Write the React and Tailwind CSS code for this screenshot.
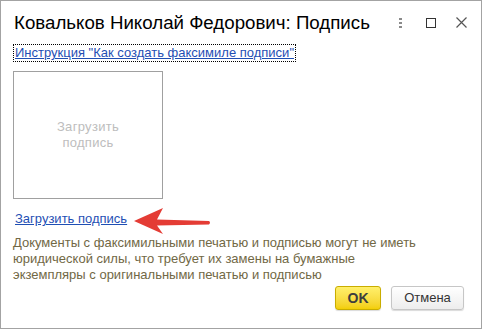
import React from 'react'

function App() {
  return (
    <div className="w-[483px] h-[330px] bg-white font-['Liberation_Sans',Arial,sans-serif]">
      <div className="relative w-[482px] h-[329px] border border-[#a3a3a3] bg-white">
        {/* Header */}
        <div className="flex items-center h-[43px] pl-[13px] pr-[14px]">
          <h1 className="text-[18.7px] leading-[22px] text-black mt-[1px]">Ковальков Николай Федорович: Подпись</h1>
          <div className="ml-auto flex items-center">
            <div className="flex flex-col gap-[2px] w-[2px] mr-[25px]">
              <span className="block w-[3px] h-[2px] bg-[#8a8a8a]"></span>
              <span className="block w-[3px] h-[2px] bg-[#8a8a8a]"></span>
              <span className="block w-[3px] h-[2px] bg-[#8a8a8a]"></span>
            </div>
            <div className="w-[10px] h-[10px] border-[1.5px] border-[#333] mr-[20px]"></div>
            <svg width="11" height="11" viewBox="0 0 11 11">
              <path d="M0.5 0.5 L10.5 10.5 M10.5 0.5 L0.5 10.5" stroke="#555" strokeWidth="1.2" />
            </svg>
          </div>
        </div>

        {/* Body */}
        <div className="pl-[12px] pr-[14px]">
          <a href="#" className="block w-fit border border-dotted border-black px-[1px] text-[13px] leading-[16px] text-[#1f4fb4] underline">
            Инструкция "Как создать факсимиле подписи"
          </a>

          <div className="mt-[9px] w-[150px] h-[128px] border border-[#a0a0a0] flex items-center justify-center">
            <div className="text-center text-[13px] leading-[16px] text-[#bdbdbd] tracking-[0.3px]">
              Загрузить<br />подпись
            </div>
          </div>

          <a href="#" className="block w-fit mt-[12px] ml-[2px] text-[13px] leading-[16px] text-[#1f4fb4] underline">
            Загрузить подпись
          </a>

          <p className="mt-[8px] text-[13px] leading-[16px] text-[#716845]">
            Документы с факсимильными печатью и подписью могут не иметь<br />
            юридической силы, что требует их замены на бумажные<br />
            экземпляры с оригинальными печатью и подписью
          </p>

          <div className="flex justify-end gap-[10px] mt-[3px] pr-[3px]">
            <button className="w-[46px] h-[24px] rounded-[3px] border border-[#c9ad00] bg-gradient-to-b from-[#fff06a] to-[#f3cf00] text-[14px] font-bold text-[#3d3d3d] shadow-[0_1px_1px_rgba(0,0,0,0.15)]">
              OK
            </button>
            <button className="w-[73px] h-[24px] rounded-[3px] border border-[#c6c6c6] bg-gradient-to-b from-white to-[#ededed] text-[13px] text-[#333] shadow-[0_1px_1px_rgba(0,0,0,0.15)]">
              Отмена
            </button>
          </div>
        </div>

        {/* Red annotation arrow */}
        <svg className="absolute left-[130px] top-[204px]" width="82" height="32" viewBox="0 0 82 32">
          <path d="M3 16 L32 3 L26 14.5 L78 16 Q80 17.5 78 19.5 L26 20.5 L32 29 Z" fill="#e43c35" />
        </svg>
      </div>
    </div>
  )
}

export default App
